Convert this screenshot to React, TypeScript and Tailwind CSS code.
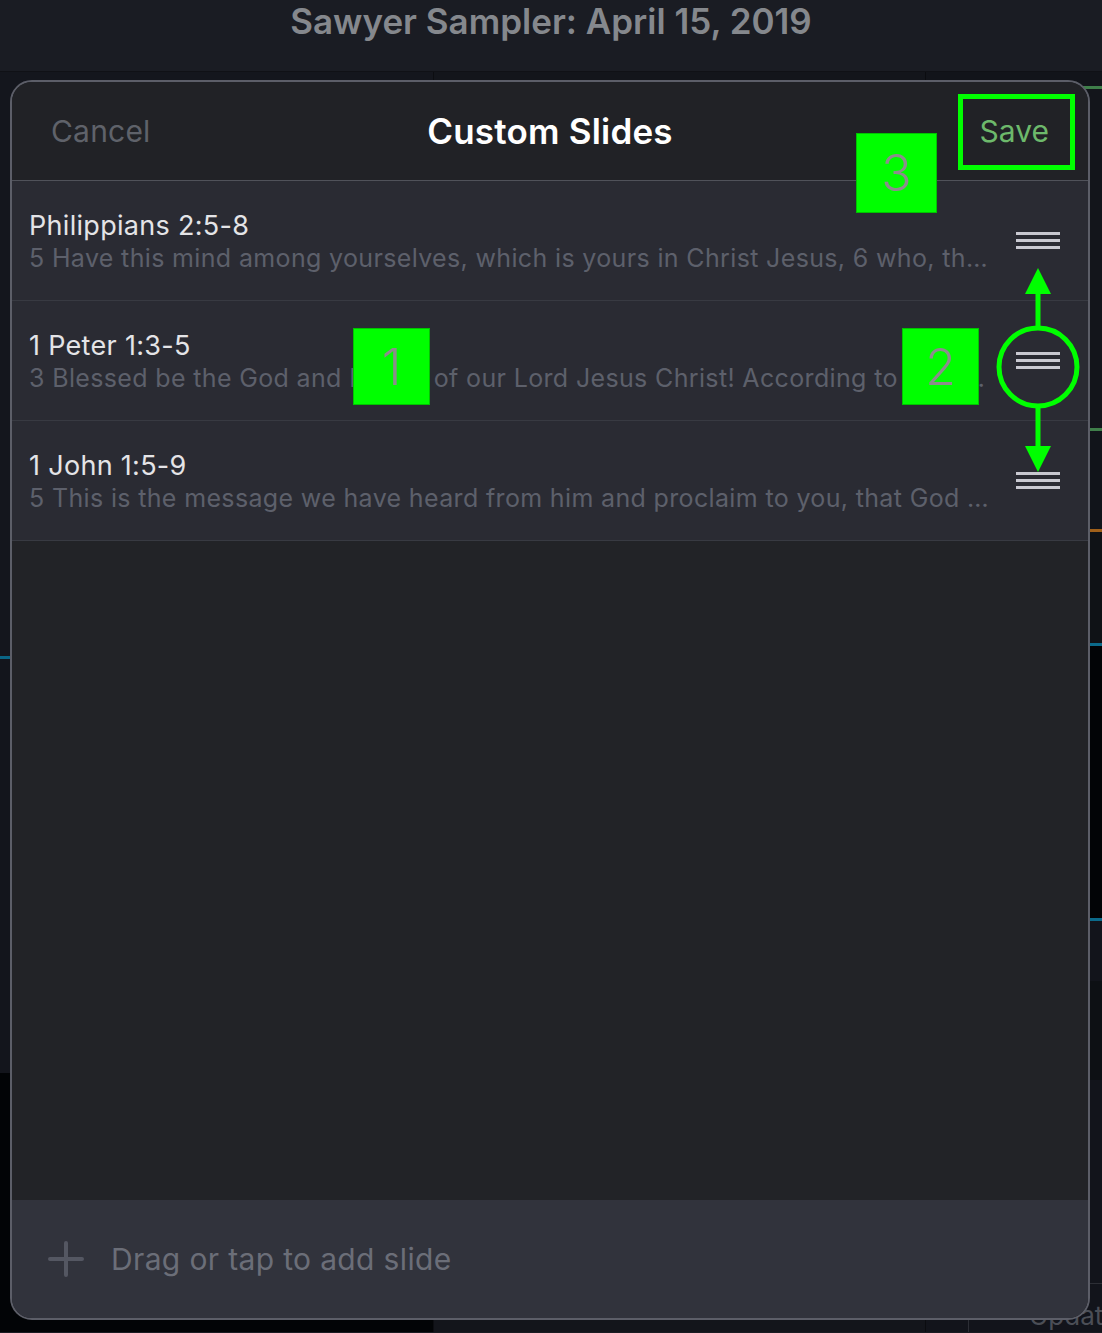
import React from 'react'

const slides = [
  {
    title: 'Philippians 2:5-8',
    text: '5 Have this mind among yourselves, which is yours in Christ Jesus, 6 who, though he was in the form of God, did not count equality with God a thing to be grasped',
  },
  {
    title: '1 Peter 1:3-5',
    text: '3 Blessed be the God and Father of our Lord Jesus Christ! According to his great mercy, he has caused us to be born again',
  },
  {
    title: '1 John 1:5-9',
    text: '5 This is the message we have heard from him and proclaim to you, that God is light, and in him is no darkness at all.',
  },
]

const font = { fontFamily: 'Inter, "Noto Sans", sans-serif' }

const DragHandle = () => (
  <div className="flex w-[44px] shrink-0 flex-col gap-[4px]">
    <div className="h-[3px] bg-[#c9c9d1]" />
    <div className="h-[3px] bg-[#c9c9d1]" />
    <div className="h-[3px] bg-[#c9c9d1]" />
  </div>
)

const SlideRow = ({ title, text }: { title: string; text: string }) => (
  <li className="flex h-[120px] items-center gap-[22px] border-b border-[#383a42] bg-[#2a2b33] pl-[17px] pr-[28px]">
    <div className="min-w-0 flex-1 pt-[3px]">
      <p className="truncate text-[27px] leading-[32px] tracking-[0.3px] text-[#e4e4e7]">{title}</p>
      <p className="truncate text-[25px] leading-[32px] tracking-[0.35px] text-[#5d606b]">{text}</p>
    </div>
    <DragHandle />
  </li>
)

const Marker = ({ label, className }: { label: string; className: string }) => (
  <div
    className={`absolute flex items-center justify-center border border-[#00c400] bg-[#00ff00] text-[50px] font-light leading-none text-[#8c8c8c] ${className}`}
  >
    {label}
  </div>
)

export default function App() {
  return (
    <div className="relative h-[1333px] w-[1102px] overflow-hidden bg-[#1a1c23]" style={font}>
      {/* page under the sheet */}
      <header className="flex h-[72px] justify-center border-b border-[#101116]">
        <h1 className="text-[35px] font-semibold leading-[42px] text-[#85888d]">
          Sawyer Sampler: April 15, 2019
        </h1>
      </header>
      <div className="flex h-[1260px]">
        <div className="flex w-[433px] flex-col bg-[#14161d]">
          <div className="h-[584px]" />
          <div className="h-[3px] bg-[#0a6585]" />
          <div className="h-[414px] bg-[#13151c]" />
          <div className="flex-1 bg-[#020406]" />
        </div>
        <div className="flex-1 border-l border-[#0c0d11] bg-[#13151b]" />
        <div className="flex w-[177px] flex-col border-l border-[#0b0c10] bg-[#12141a]">
          <div className="h-[14px]" />
          <div className="ml-auto h-[3px] w-[20px] bg-[#3f7f4a]" />
          <div className="h-[341px] bg-[#13151b]" />
          <div className="ml-auto h-[3px] w-[20px] bg-[#3f7f4a]" />
          <div className="h-[98px] bg-[#11141a]" />
          <div className="h-[3px] bg-[#a0601a]" />
          <div className="h-[112px] bg-[#0f1216]" />
          <div className="h-[3px] bg-[#0b6a8a]" />
          <div className="h-[273px] bg-[#020406]" />
          <div className="h-[3px] bg-[#0b6a8a]" />
          <div className="h-[60px] bg-[#12141b]" />
          <div className="h-[100px] bg-[#0d1014]" />
          <div className="flex-1 bg-[#12141b] pl-[42px] pt-[203px]">
            <div className="h-full border-l border-t border-[#2c2e35] pl-[60px] pt-[16px] text-[26px] leading-[32px] text-[#4b4e56]">
              Update
            </div>
          </div>
        </div>
      </div>

      {/* sheet */}
      <section className="absolute left-[10px] top-[80px] flex h-[1240px] w-[1080px] flex-col overflow-hidden rounded-[22px] border-2 border-[#5c5e68] bg-[#222327]">
        <div className="grid h-[99px] shrink-0 grid-cols-[1fr_auto_1fr] items-center border-b border-[#50525a] bg-[#212226] px-[39px]">
          <button className="justify-self-start text-[30px] tracking-[0.2px] text-[#5f626a]">Cancel</button>
          <h2 className="text-[35px] font-semibold tracking-[0.2px] text-white">Custom Slides</h2>
          <button className="justify-self-end text-[30px] text-[#6db96b]">Save</button>
        </div>
        <ul>
          {slides.map((s) => (
            <SlideRow key={s.title} title={s.title} text={s.text} />
          ))}
        </ul>
        <div className="flex-1" />
        <div className="flex h-[118px] shrink-0 items-center gap-[27px] bg-[#31333c] pl-[36px]">
          <svg width="36" height="36" viewBox="0 0 36 36" className="shrink-0">
            <path d="M18 2v32M2 18h32" stroke="#545762" strokeWidth="4" strokeLinecap="round" />
          </svg>
          <span className="text-[30px] tracking-[0.35px] text-[#6b6e78]">Drag or tap to add slide</span>
        </div>
      </section>

      {/* annotations */}
      <div className="absolute left-[958px] top-[94px] h-[76px] w-[117px] border-[5px] border-[#00ff00]" />
      <Marker label="3" className="left-[856px] top-[133px] h-[80px] w-[81px]" />
      <Marker label="1" className="left-[353px] top-[328px] h-[77px] w-[77px]" />
      <Marker label="2" className="left-[902px] top-[328px] h-[77px] w-[77px]" />
      <svg className="absolute left-[990px] top-[260px]" width="100" height="220" viewBox="0 0 100 220">
        <circle cx="48" cy="107" r="39" fill="none" stroke="#00ff00" strokeWidth="5" />
        <path d="M48 68V30M48 146v40" stroke="#00ff00" strokeWidth="5" />
        <path d="M35 34L48 8L61 34Z" fill="#00ff00" />
        <path d="M35 186L48 212L61 186Z" fill="#00ff00" />
      </svg>
    </div>
  )
}
